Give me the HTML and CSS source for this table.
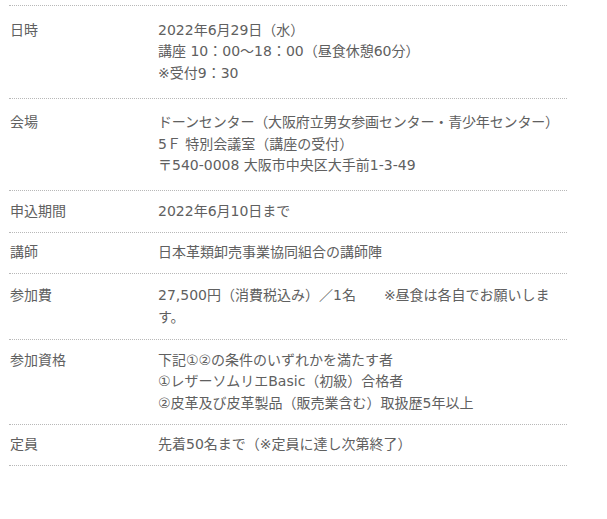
FILE: index.html
```html
<!DOCTYPE html>
<html lang="ja">

<head>
  <meta charset="UTF-8">
  <meta name="viewport" content="width=device-width, initial-scale=1.0">
  <title>講座概要</title>
  <link rel="stylesheet" href="styles.css">
</head>

<body>
  <div class="outline">
    <div class="row row-tall">
      <div class="label">日時</div>
      <div class="value">
        2022年6月29日（水）<br>
        講座 10：00〜18：00（昼食休憩60分）<br>
        ※受付9：30
      </div>
    </div>

    <div class="row row-tall">
      <div class="label">会場</div>
      <div class="value">
        <span class="tight">ドーンセンター（大阪府立男女参画センター・青少年センター）</span><br>
        5Ｆ 特別会議室（講座の受付）<br>
        〒540-0008 大阪市中央区大手前1-3-49
      </div>
    </div>

    <div class="row">
      <div class="label">申込期間</div>
      <div class="value">2022年6月10日まで</div>
    </div>

    <div class="row">
      <div class="label">講師</div>
      <div class="value">日本革類卸売事業協同組合の講師陣</div>
    </div>

    <div class="row row-fee">
      <div class="label">参加費</div>
      <div class="value">27,500円（消費税込み）／1名　　※昼食は各自でお願いします。</div>
    </div>

    <div class="row">
      <div class="label">参加資格</div>
      <div class="value">
        下記①②の条件のいずれかを満たす者<br>
        ①レザーソムリエBasic（初級）合格者<br>
        ②皮革及び皮革製品（販売業含む）取扱歴5年以上
      </div>
    </div>

    <div class="row">
      <div class="label">定員</div>
      <div class="value">先着50名まで（※定員に達し次第終了）</div>
    </div>
  </div>
</body>

</html>
```

FILE: styles.css
```css
* {
  margin: 0;
  padding: 0;
  box-sizing: border-box;
}

body {
  background: #ffffff;
  color: #606060;
  font-family: 'DejaVu Sans', 'Noto Sans CJK JP', sans-serif;
  font-size: 14px;
  line-height: 21.5px;
  padding: 5px 0 0 9px;
}

.outline {
  width: 558px;
  border-top: 1px dotted #b8b8b8;
}

.row {
  display: grid;
  grid-template-columns: 148px 1fr;
  padding: 9.5px 8px 9.5px 1px;
  border-bottom: 1px dotted #b8b8b8;
}

.row-tall {
  padding-top: 13.5px;
  padding-bottom: 13.5px;
}

.row-fee {
  padding-top: 11px;
  padding-bottom: 11px;
}

.label {
  white-space: nowrap;
}

/* long venue name: squeeze so it stays on one line */
.tight {
  letter-spacing: -0.15px;
  white-space: nowrap;
}
```
